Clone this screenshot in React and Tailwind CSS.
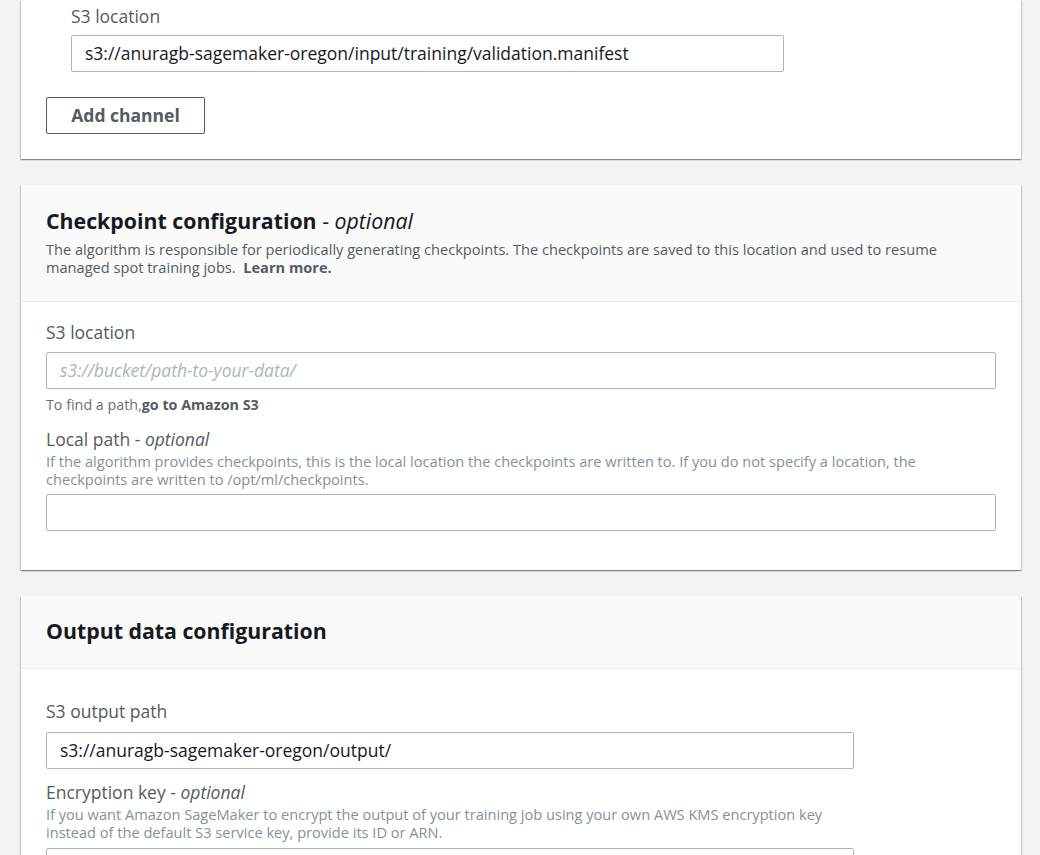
const font = { fontFamily: '"Open Sans", "Noto Sans", Arial, sans-serif' };

function Card({ children, className = "" }) {
  return (
    <div
      className={`mx-[21px] w-[1000px] bg-white shadow-[0_1px_1px_0_rgba(0,28,36,0.3),1px_1px_1px_0_rgba(0,28,36,0.15),-1px_1px_1px_0_rgba(0,28,36,0.15)] ${className}`}
    >
      {children}
    </div>
  );
}

function Label({ children, optional }) {
  return (
    <div className="text-[17.5px] leading-[22px] text-[#545b64]">
      {children}
      {optional && (
        <>
          {" - "}
          <i>optional</i>
        </>
      )}
    </div>
  );
}

function Input({ value, placeholder, width = "w-[950px]" }) {
  return (
    <div
      className={`flex h-[37px] items-center rounded-[2px] border border-[#aab7b8] bg-white px-[13px] text-[17.5px] ${width}`}
    >
      {value ? (
        <span className="text-[#16191f]">{value}</span>
      ) : (
        <span className="italic text-[#aab7b8]">{placeholder}</span>
      )}
    </div>
  );
}

function Header({ title, optional, children, className = "" }) {
  return (
    <div className={`border-b border-[#eaeded] bg-[#fafafa] px-[25px] ${className}`}>
      <h2 className="text-[21.3px] font-bold leading-[28px] text-[#16191f]">
        {title}
        {optional && (
          <span className="font-normal">
            {" - "}
            <i>optional</i>
          </span>
        )}
      </h2>
      {children}
    </div>
  );
}

export default function App() {
  return (
    <div className="min-h-[855px] overflow-hidden bg-[#f2f3f3] pb-10" style={font}>
      <Card className="px-[25px] pb-[25px] pt-[5px]">
        <div className="pl-[25px]">
          <Label>S3 location</Label>
          <div className="mt-[8px]">
            <Input value="s3://anuragb-sagemaker-oregon/input/training/validation.manifest" width="w-[713px]" />
          </div>
        </div>
        <button className="mt-[25px] h-[37px] w-[159px] rounded-[2px] border border-[#545b64] bg-white text-[17.5px] font-bold text-[#545b64]">
          Add channel
        </button>
      </Card>

      <Card className="mt-[26px]">
        <Header title="Checkpoint configuration" optional className="pb-[25px] pt-[22px]">
          <p className="mt-[5px] text-[14.6px] leading-[18px] text-[#545b64]">
            The algorithm is responsible for periodically generating checkpoints. The checkpoints are saved to this
            location and used to resume
            <br />
            managed spot training jobs.&nbsp; <b>Learn more.</b>
          </p>
        </Header>
        <div className="px-[25px] pb-[39px] pt-[19px]">
          <Label>S3 location</Label>
          <div className="mt-[9px]">
            <Input placeholder="s3://bucket/path-to-your-data/" />
          </div>
          <p className="mt-[7px] text-[14.3px] leading-[18px] text-[#687078]">
            To find a path,<b className="text-[#545b64]">go to Amazon S3</b>
          </p>
          <div className="mt-[14px]">
            <Label optional>Local path</Label>
          </div>
          <p className="mt-[2px] text-[14.6px] leading-[18px] text-[#879196]">
            If the algorithm provides checkpoints, this is the local location the checkpoints are written to. If you do
            not specify a location, the
            <br />
            checkpoints are written to /opt/ml/checkpoints.
          </p>
          <div className="mt-[6px]">
            <Input />
          </div>
        </div>
      </Card>

      <Card className="mt-[26px]">
        <Header title="Output data configuration" className="pb-[23px] pt-[21px]" />
        <div className="px-[25px] pb-[38px] pt-[31px]">
          <Label>S3 output path</Label>
          <div className="mt-[10px]">
            <Input value="s3://anuragb-sagemaker-oregon/output/" width="w-[808px]" />
          </div>
          <div className="mt-[12px]">
            <Label optional>Encryption key</Label>
          </div>
          <p className="mt-[2px] text-[14.6px] leading-[18px] text-[#879196]">
            If you want Amazon SageMaker to encrypt the output of your training job using your own AWS KMS encryption key
            <br />
            instead of the default S3 service key, provide its ID or ARN.
          </p>
          <div className="mt-[7px]">
            <Input width="w-[808px]" />
          </div>
        </div>
      </Card>
    </div>
  );
}
